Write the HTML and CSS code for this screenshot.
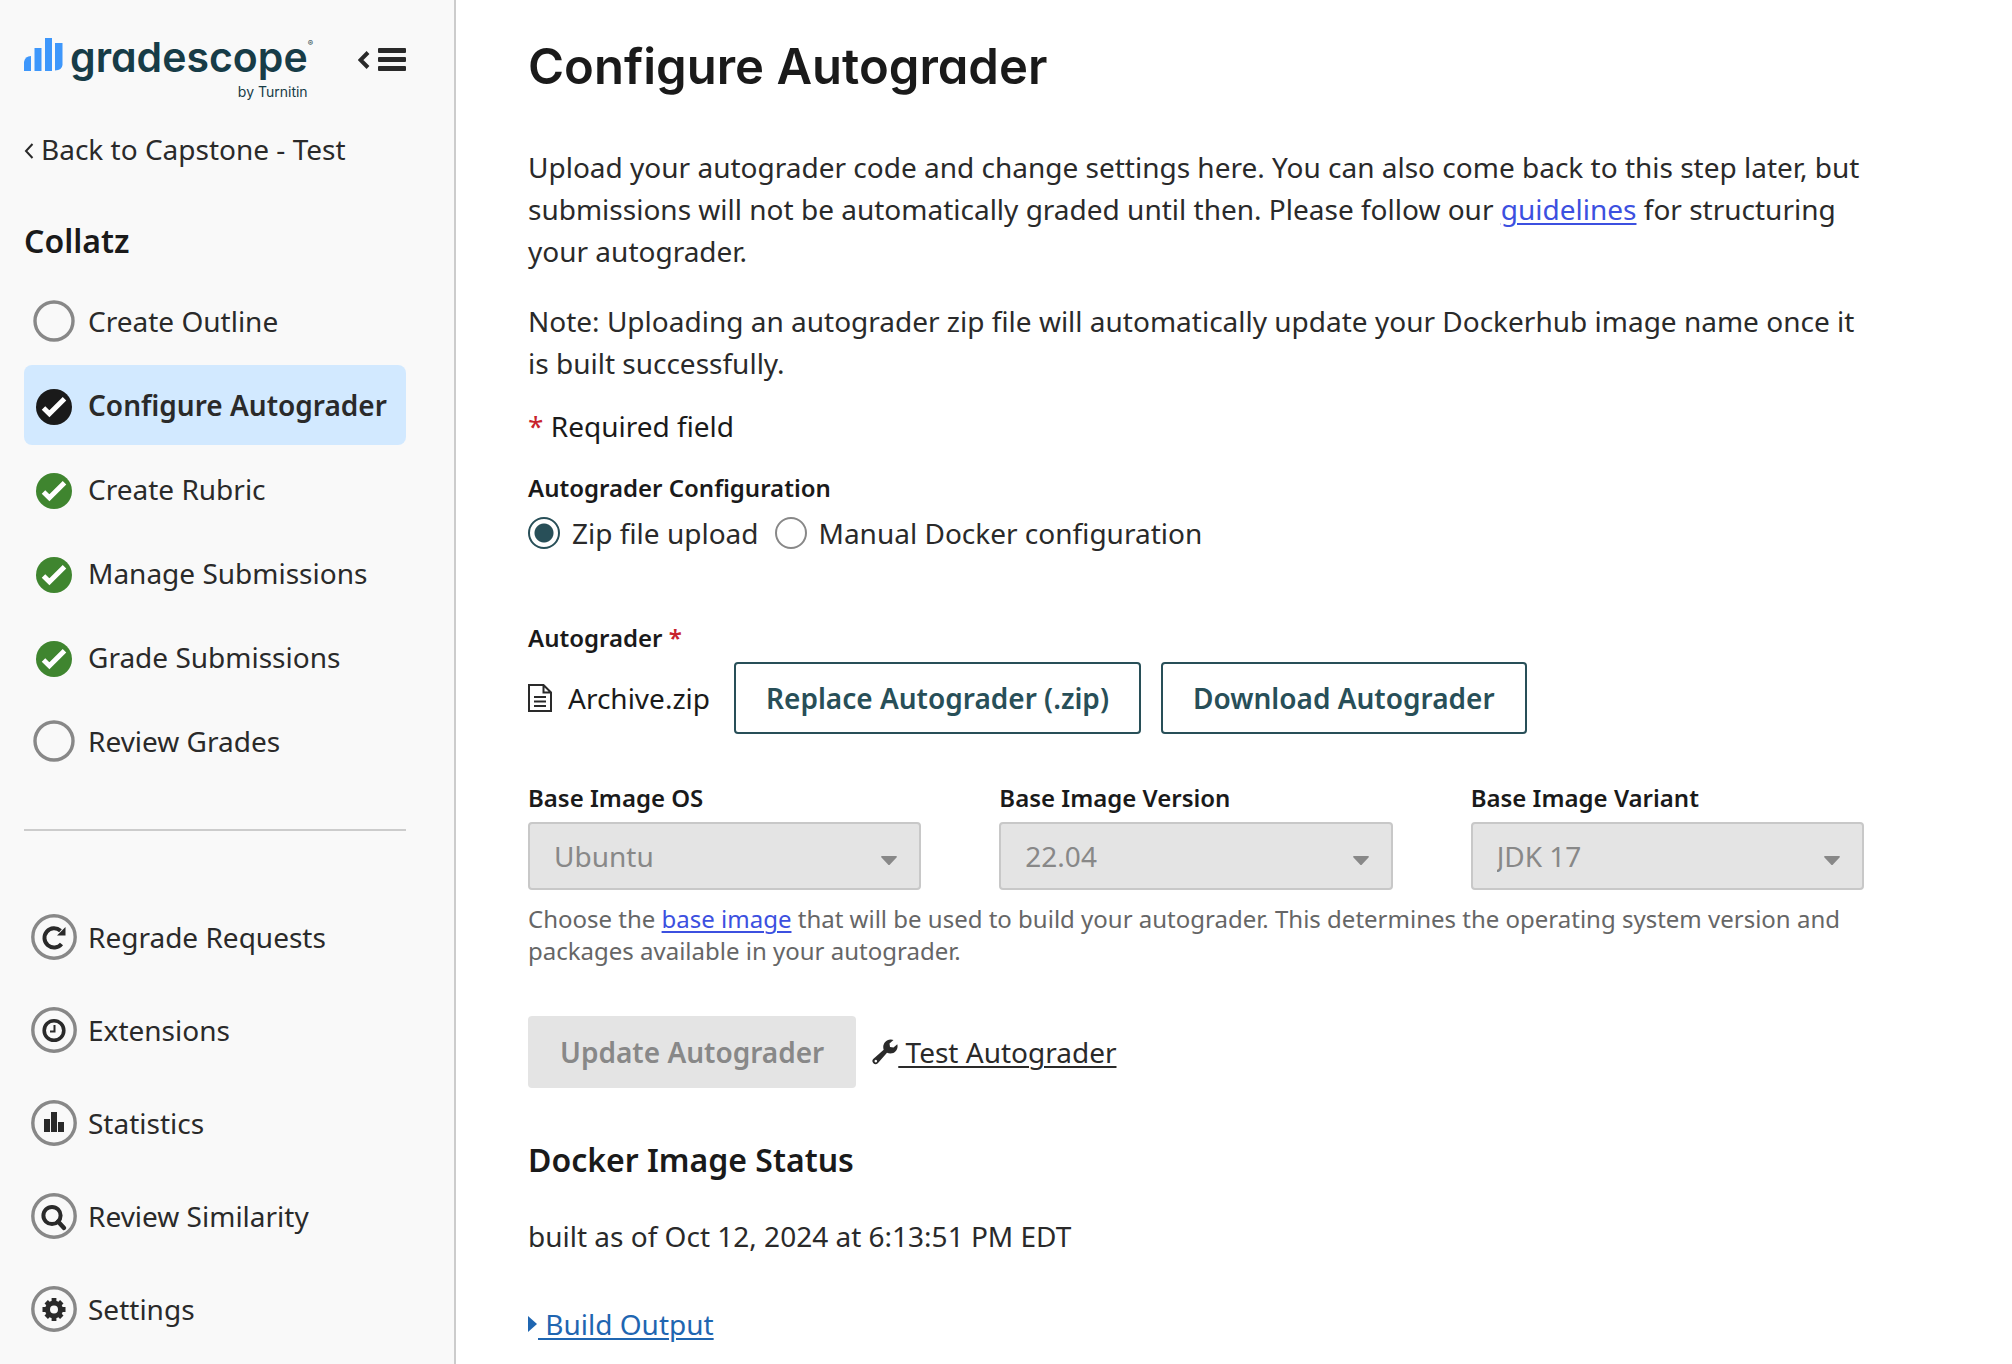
FILE: index.html
```html
<!DOCTYPE html>
<html lang="en">
<head>
<meta charset="utf-8">
<title>Configure Autograder | Gradescope</title>
<link rel="stylesheet" href="styles.css">
</head>
<body>
<svg class="sprite" aria-hidden="true">
  <symbol id="i-open" viewBox="0 0 48 48"><circle cx="24" cy="24" r="19" fill="none" stroke="#888" stroke-width="3.4"/></symbol>
  <symbol id="i-check" viewBox="0 0 48 48"><circle cx="24" cy="26" r="18" fill="currentColor"/><path d="M13.500 27L19.400 32.800L34.500 17.800" fill="none" stroke="#fff" stroke-width="5" stroke-linejoin="miter"/></symbol>
  <symbol id="i-ring" viewBox="0 0 48 48"><circle cx="24" cy="24" r="21.200" fill="none" stroke="#888" stroke-width="3.400"/></symbol>
</svg>
<div class="layout">
  <aside class="sidebar">
    <div class="top">
      <a class="logo" href="#" aria-label="Gradescope by Turnitin">
        <svg class="bars" viewBox="0 0 39 34" aria-hidden="true"><g fill="#3e97fb"><path d="M0 34V25Q1 19 7 19V34Z"/><path d="M10.500 11H17.500V34H10.500Z"/><path d="M21 1H28V34H21Z"/><path d="M31 6H38.500V28Q38 33 31 33.500Z"/></g></svg>
        <span class="word">gradescope<sup>®</sup></span>
        <span class="by">by Turnitin</span>
      </a>
      <button class="collapse" type="button" aria-label="Collapse sidebar">
        <svg viewBox="0 0 48 24" aria-hidden="true"><path d="M10 4.500L2.500 12L10 19.500" fill="none" stroke="#2a2a2a" stroke-width="4"/><g fill="#2a2a2a"><rect x="20" y="0" width="28" height="5" rx="1"/><rect x="20" y="9" width="28" height="5" rx="1"/><rect x="20" y="18" width="28" height="5" rx="1"/></g></svg>
      </button>
    </div>
    <a class="back" href="#"><svg viewBox="0 0 10 16" aria-hidden="true"><path d="M8.500 1L2 8L8.500 15" fill="none" stroke="#2a2a2a" stroke-width="2"/></svg>Back to Capstone - Test</a>
    <h2 class="assignment">Collatz</h2>
    <nav class="steps">
      <a href="#"><svg><use href="#i-open"/></svg>Create Outline</a>
      <a href="#" class="active" aria-current="page"><svg><use href="#i-check"/></svg>Configure Autograder</a>
      <a href="#" class="done"><svg><use href="#i-check"/></svg>Create Rubric</a>
      <a href="#" class="done"><svg><use href="#i-check"/></svg>Manage Submissions</a>
      <a href="#" class="done"><svg><use href="#i-check"/></svg>Grade Submissions</a>
      <a href="#"><svg><use href="#i-open"/></svg>Review Grades</a>
    </nav>
    <hr>
    <nav class="tools">
      <a href="#"><svg viewBox="0 0 48 48"><use href="#i-ring"/><path d="M31.500 31A9.600 9.600 0 1 1 30.500 17.800" fill="none" stroke="currentColor" stroke-width="4"/><path d="M35.500 14V22.500H27Z" fill="currentColor"/></svg>Regrade Requests</a>
      <a href="#"><svg viewBox="0 0 48 48"><use href="#i-ring"/><circle cx="24" cy="24.500" r="9.800" fill="none" stroke="currentColor" stroke-width="3.600"/><path d="M24.500 19V25.500H20" fill="none" stroke="currentColor" stroke-width="2"/></svg>Extensions</a>
      <a href="#"><svg viewBox="0 0 48 48"><use href="#i-ring"/><path d="M14 20H20V33H14ZM21 13H27V33H21ZM28 23H34V33H28Z" fill="currentColor"/></svg>Statistics</a>
      <a href="#"><svg viewBox="0 0 48 48"><use href="#i-ring"/><circle cx="22" cy="23.500" r="8.600" fill="none" stroke="currentColor" stroke-width="4"/><path d="M28 29.500L34 36" fill="none" stroke="currentColor" stroke-width="4.400" stroke-linecap="round"/></svg>Review Similarity</a>
      <a href="#"><svg viewBox="0 0 48 48"><use href="#i-ring"/><circle cx="24" cy="24.500" r="6.500" fill="none" stroke="currentColor" stroke-width="5"/><g stroke="currentColor" stroke-width="4.800"><path d="M24 13V18M24 31V36M12.500 24.500H17.500M30.500 24.500H35.500"/><path d="M16.200 16.700L19.500 20M28.500 29L31.800 32.300M31.800 16.700L28.500 20M19.500 29L16.200 32.300"/></g></svg>Settings</a>
    </nav>
  </aside>
  <main class="content">
    <h1>Configure Autograder</h1>
    <p class="intro">Upload your autograder code and change settings here. You can also come back to this step later, but submissions will not be automatically graded until then. Please follow our <a href="#">guidelines</a> for structuring your autograder.</p>
    <p class="note">Note: Uploading an autograder zip file will automatically update your Dockerhub image name once it is built successfully.</p>
    <p class="required"><span class="star">*</span> Required field</p>
    <form>
      <fieldset>
        <legend class="label">Autograder Configuration</legend>
        <div class="radios">
          <label><input type="radio" name="mode" checked>Zip file upload</label>
          <label><input type="radio" name="mode">Manual Docker configuration</label>
        </div>
      </fieldset>
      <div class="label">Autograder <span class="star">*</span></div>
      <div class="file-row">
        <span class="file"><svg viewBox="0 0 24 28" aria-hidden="true"><path d="M1 1H15.500L23 8.500V27H1ZM15.500 1V8.500H23" fill="none" stroke="#2a2a2a" stroke-width="2"/><path d="M6 13H18M6 17.500H18M6 22H18" stroke="#2a2a2a" stroke-width="2"/></svg>Archive.zip</span>
        <button class="btn" type="button">Replace Autograder (.zip)</button>
        <button class="btn" type="button">Download Autograder</button>
      </div>
      <div class="selects">
        <div><label class="label" for="os">Base Image OS</label><div class="select"><select id="os" disabled><option>Ubuntu</option></select><svg viewBox="0 0 16 9"><path d="M1 0H15Q16.500 0 15.500 1.500L9 8.500Q8 9.500 7 8.500L.5 1.500Q-.5 0 1 0Z" fill="#888"/></svg></div></div>
        <div><label class="label" for="ver">Base Image Version</label><div class="select"><select id="ver" disabled><option>22.04</option></select><svg viewBox="0 0 16 9"><path d="M1 0H15Q16.500 0 15.500 1.500L9 8.500Q8 9.500 7 8.500L.5 1.500Q-.5 0 1 0Z" fill="#888"/></svg></div></div>
        <div><label class="label" for="variant">Base Image Variant</label><div class="select"><select id="variant" disabled><option>JDK 17</option></select><svg viewBox="0 0 16 9"><path d="M1 0H15Q16.500 0 15.500 1.500L9 8.500Q8 9.500 7 8.500L.5 1.500Q-.5 0 1 0Z" fill="#888"/></svg></div></div>
      </div>
      <p class="help">Choose the <a href="#">base image</a> that will be used to build your autograder. This determines the operating system version and packages available in your autograder.</p>
      <div class="actions">
        <button class="btn" type="submit" disabled>Update Autograder</button>
        <a class="test" href="#"><svg viewBox="0 0 26 26" aria-hidden="true"><path fill-rule="evenodd" fill="#2a2a2a" d="M25.300 5.200C26.500 9.800 23.500 14.500 18.500 14.500Q16.500 14.500 15 13.800L5.800 24.300Q3.500 26.300 1.400 24.300Q-.6 22.300 1.200 20L11.700 10.800C10 6 13.200 .6 18.500 .4Q20.200 .3 21.500 1L17.500 4.500L18 8L21.500 8.500ZM3.800 20.800A1.300 1.300 0 1 0 3.810 20.800Z"/></svg><span>&nbsp;Test Autograder</span></a>
      </div>
    </form>
    <h2 class="status">Docker Image Status</h2>
    <p class="built">built as of Oct 12, 2024 at 6:13:51 PM EDT</p>
    <a class="output" href="#"><svg viewBox="0 0 10 16" aria-hidden="true"><path d="M0 0L9 8L0 16Z" fill="#1f66b1"/></svg><span>&nbsp;Build Output</span></a>
  </main>
</div>
</body>
</html>
```

FILE: styles.css
```css
* { box-sizing: border-box; }

body {
  margin: 0;
  background: #fff;
  color: #2a2a2a;
  font: 28px/42px "Noto Sans", sans-serif;
}

h1, h2, p { margin: 0; }
a { color: #3c50e0; text-underline-offset: 3px; text-decoration-thickness: 2px; }
svg { display: block; flex: none; }
.sprite { position: absolute; width: 0; height: 0; }

.layout { display: flex; min-height: 100vh; }

/* Sidebar */
.sidebar {
  flex: none;
  width: 456px;
  padding: 32px 48px 14px 24px;
  background: #f9f9f9;
  border-right: 2px solid #ccc;
}
.sidebar a { color: #2a2a2a; text-decoration: none; }

.top { display: flex; justify-content: space-between; height: 96px; }

.sidebar .logo {
  display: grid;
  grid-template-columns: 39px auto;
  column-gap: 7px;
  align-content: start;
  color: #173c47;
  font-family: Inter, sans-serif;
  font-feature-settings: "cv11";
}
.bars { width: 39px; height: 34px; margin-top: 5px; }
.word { font-size: 41px; font-weight: 600; line-height: 50px; white-space: nowrap; }
.word sup { display: inline-block; width: 0; font-size: 8px; font-weight: 400; line-height: 8px; vertical-align: 26px; }
.by { grid-column: 2; justify-self: end; font-size: 14px; line-height: 20px; }

.collapse { align-self: start; margin-top: 16px; padding: 0; border: 0; background: none; }
.collapse svg { width: 48px; height: 24px; }

.back { display: flex; align-items: center; gap: 7px; }
.back svg { width: 10px; height: 16px; margin-top: 4px; }

.assignment { margin: 47px 0 16px; font-size: 32px; line-height: 48px; font-weight: 600; color: #1a1a1a; }

.steps, .tools { display: flex; flex-direction: column; gap: 4px; }
.tools { gap: 13px; }
.steps a, .tools a {
  display: flex;
  align-items: center;
  gap: 10px;
  height: 80px;
  padding: 0 6px;
  border-radius: 8px;
}
.steps svg, .tools svg { width: 48px; height: 48px; }
.steps .active { background: #d2e9ff; font-weight: 600; }
.steps .active svg { color: #1a1a1a; }
.steps .done svg { color: #3f852f; }

hr { margin: 48px 0 66px; border: 0; border-top: 2px solid #ccc; }

/* Main column */
.content { flex: 1; min-width: 0; padding: 36px 148px 20px 72px; }

h1 {
  margin-bottom: 48px;
  color: #1a1a1a;
  font: 600 49px/62px Inter, sans-serif;
  font-feature-settings: "cv11";
}
.note { margin-top: 28px; }
.required { margin: 21px 0 25px; color: #1a1a1a; }
.star { color: #c8232c; }

fieldset { margin: 0 0 68px; padding: 0; border: 0; }
.label { display: block; padding: 0; color: #1a1a1a; font-size: 24px; line-height: 32px; font-weight: 600; margin-bottom: 8px; }

.radios { display: flex; gap: 16px; }
.radios label { display: flex; align-items: center; gap: 12px; }
.radios input {
  appearance: none;
  width: 32px;
  height: 32px;
  margin: 0;
  border: 2px solid #888;
  border-radius: 50%;
  background: #fff;
}
.radios input:checked { border-color: #284f58; background: radial-gradient(circle, #284f58 9px, #fff 10px); }

.file-row { display: flex; align-items: center; gap: 20px; }
.file { display: flex; align-items: center; gap: 16px; margin-right: 4px; color: #1a1a1a; }
.file svg { width: 24px; height: 28px; }

.btn {
  height: 72px;
  padding: 0 30px;
  border: 2px solid #284f58;
  border-radius: 4px;
  background: #fff;
  color: #284f58;
  font: inherit;
  font-weight: 600;
}
.btn:disabled { border-color: #e4e4e4; background: #e4e4e4; color: #888; }

.selects { display: grid; grid-template-columns: repeat(3, 1fr); gap: 78px; margin-top: 48px; }
.select { position: relative; }
.select select {
  appearance: none;
  display: block;
  width: 100%;
  height: 68px;
  padding: 0 24px;
  border: 2px solid #c8c8c8;
  border-radius: 4px;
  background: #e4e4e4;
  color: #888;
  font: inherit;
  opacity: 1;
}
.select svg { position: absolute; right: 24px; top: 34px; width: 16px; height: 9px; }

.help { margin: 13px 0 49px; color: #666; font-size: 24px; line-height: 32px; }

.actions { display: flex; align-items: center; gap: 16px; }
.test, .output { display: flex; align-items: center; text-decoration: none; }
.test { color: #2a2a2a; }
.test svg { width: 26px; height: 26px; }
.test span, .output span { text-decoration: underline 2px; text-underline-offset: 3px; }

.status { margin: 48px 0 31px; color: #1a1a1a; font-size: 32px; line-height: 48px; font-weight: 600; }
.built { margin-bottom: 46px; }
.output { color: #1f66b1; }
.output svg { width: 10px; height: 16px; }
```
